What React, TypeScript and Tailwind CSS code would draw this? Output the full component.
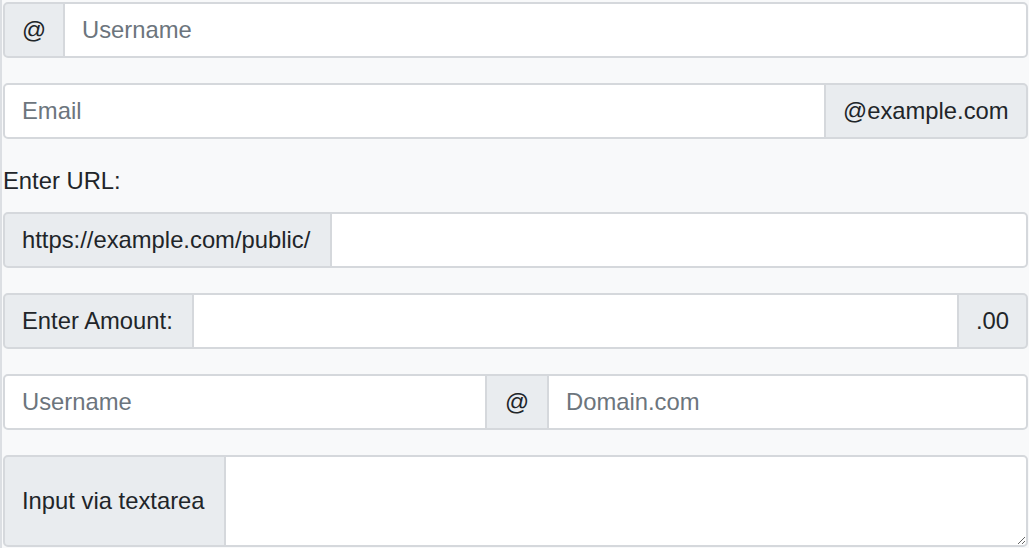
import React from 'react';

const font = { fontFamily: '"Liberation Sans", Arial, sans-serif' };

const addon =
  'flex items-center whitespace-nowrap bg-[#e9ecef] px-[17px] text-[23.8px] text-[#212529] border-2 border-[#d5d8dc]';
const input =
  'min-w-0 flex-1 bg-white px-[17px] text-[23.8px] text-[#212529] placeholder:text-[#6c757d] outline-none border-2 border-[#d5d8dc]';

export default function App() {
  return (
    <div
      className="min-h-[548px] w-full border-l-2 border-[#dcdfe3] bg-[#f8f9fa] pl-[1px] pr-[1px] pt-[2px]"
      style={font}
    >
      {/* @ Username */}
      <div className="mb-[25px] flex h-[56px]">
        <span className={`${addon} w-[62px] justify-center rounded-l-[5px]`}>@</span>
        <input className={`${input} -ml-[2px] rounded-r-[5px]`} placeholder="Username" />
      </div>

      {/* Email */}
      <div className="mb-[25px] flex h-[56px]">
        <input className={`${input} rounded-l-[5px]`} placeholder="Email" />
        <span className={`${addon} -ml-[2px] w-[204px] rounded-r-[5px]`}>@example.com</span>
      </div>

      <label className="mb-[15px] block h-[33px] text-[23.8px] leading-[33px] text-[#212529]">
        Enter URL:
      </label>

      {/* URL */}
      <div className="mb-[25px] flex h-[56px]">
        <span className={`${addon} w-[329px] rounded-l-[5px]`}>https://example.com/public/</span>
        <input className={`${input} -ml-[2px] rounded-r-[5px]`} />
      </div>

      {/* Amount */}
      <div className="mb-[25px] flex h-[56px]">
        <span className={`${addon} w-[191px] rounded-l-[5px]`}>Enter Amount:</span>
        <input className={`${input} -ml-[2px]`} />
        <span className={`${addon} -ml-[2px] w-[71px] justify-center rounded-r-[5px]`}>.00</span>
      </div>

      {/* Username @ Domain */}
      <div className="mb-[25px] flex h-[56px]">
        <input className={`${input} w-[484px] flex-none rounded-l-[5px]`} placeholder="Username" />
        <span className={`${addon} -ml-[2px] w-[64px] justify-center`}>@</span>
        <input className={`${input} -ml-[2px] rounded-r-[5px]`} placeholder="Domain.com" />
      </div>

      {/* Textarea */}
      <div className="flex h-[92px]">
        <span className={`${addon} w-[223px] rounded-l-[5px]`}>Input via textarea</span>
        <textarea className={`${input} -ml-[2px] h-full rounded-r-[5px] py-[8px]`} />
      </div>
    </div>
  );
}
